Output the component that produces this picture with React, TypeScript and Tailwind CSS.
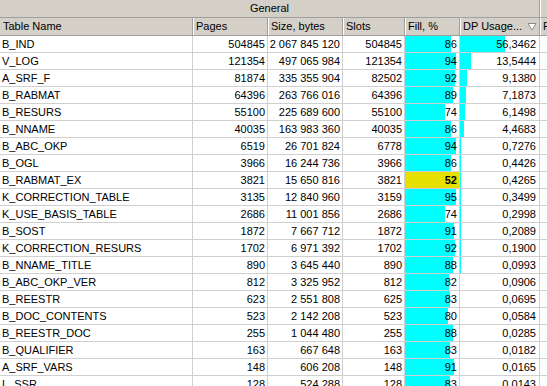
import React from "react";

type Row = [string, string, string, string, number, string];

const rows: Row[] = [
  ["B_IND", "504845", "2 067 845 120", "504845", 86, "56,3462"],
  ["V_LOG", "121354", "497 065 984", "121354", 94, "13,5444"],
  ["A_SRF_F", "81874", "335 355 904", "82502", 92, "9,1380"],
  ["B_RABMAT", "64396", "263 766 016", "64396", 89, "7,1873"],
  ["B_RESURS", "55100", "225 689 600", "55100", 74, "6,1498"],
  ["B_NNAME", "40035", "163 983 360", "40035", 86, "4,4683"],
  ["B_ABC_OKP", "6519", "26 701 824", "6778", 94, "0,7276"],
  ["B_OGL", "3966", "16 244 736", "3966", 86, "0,4426"],
  ["B_RABMAT_EX", "3821", "15 650 816", "3821", 52, "0,4265"],
  ["K_CORRECTION_TABLE", "3135", "12 840 960", "3159", 95, "0,3499"],
  ["K_USE_BASIS_TABLE", "2686", "11 001 856", "2686", 74, "0,2998"],
  ["B_SOST", "1872", "7 667 712", "1872", 91, "0,2089"],
  ["K_CORRECTION_RESURS", "1702", "6 971 392", "1702", 92, "0,1900"],
  ["B_NNAME_TITLE", "890", "3 645 440", "890", 88, "0,0993"],
  ["B_ABC_OKP_VER", "812", "3 325 952", "812", 82, "0,0906"],
  ["B_REESTR", "623", "2 551 808", "625", 83, "0,0695"],
  ["B_DOC_CONTENTS", "523", "2 142 208", "523", 80, "0,0584"],
  ["B_REESTR_DOC", "255", "1 044 480", "255", 88, "0,0285"],
  ["B_QUALIFIER", "163", "667 648", "163", 83, "0,0182"],
  ["A_SRF_VARS", "148", "606 208", "148", 91, "0,0165"],
  ["L_SSR", "128", "524 288", "128", 83, "0,0143"],
];

const hdr =
  "h-full flex items-center px-[3px] border-r border-[#a0a0a0] shadow-[inset_1px_0_0_#ffffff] whitespace-nowrap overflow-hidden";
const cell =
  "h-full flex items-center justify-end px-[2px] border-r border-[#d0d0d0] whitespace-nowrap overflow-hidden";

export default function App() {
  return (
    <div
      className="w-[547px] h-[386px] overflow-hidden bg-white text-black text-[11px] leading-none"
      style={{ fontFamily: '"Liberation Sans", Arial, sans-serif' }}
    >
      {/* group header */}
      <div className="flex h-[18px] bg-[#d4d0c8] border-b border-[#a0a0a0]">
        <div className="w-[540px] shrink-0 h-full flex items-center justify-center border-r border-[#a0a0a0]">
          General
        </div>
        <div className="flex-1 h-full shadow-[inset_1px_0_0_#ffffff]" />
      </div>
      {/* column header */}
      <div className="flex h-[18px] bg-[#d4d0c8] border-b border-[#a0a0a0]">
        <div className={`${hdr} w-[193px] shrink-0 shadow-none`}>Table Name</div>
        <div className={`${hdr} w-[75px] shrink-0`}>Pages</div>
        <div className={`${hdr} w-[75px] shrink-0`}>Size, bytes</div>
        <div className={`${hdr} w-[62px] shrink-0`}>Slots</div>
        <div className={`${hdr} w-[55px] shrink-0`}>Fill, %</div>
        <div className={`${hdr} w-[80px] shrink-0 gap-[5px]`}>
          <span>DP Usage...</span>
          <svg width="10" height="9" viewBox="0 0 10 9" className="shrink-0">
            <path d="M1 1.5 H9 L5 8 Z" fill="#ffffff" stroke="#8a8a8a" strokeWidth="1" />
          </svg>
        </div>
        <div className={`${hdr} flex-1 border-r-0`}>F</div>
      </div>
      {/* rows */}
      {rows.map(([name, pages, size, slots, fill, dp]) => {
        const dpNum = parseFloat(dp.replace(",", "."));
        const yellow = fill < 60;
        return (
          <div key={name} className="flex h-[17px] border-b border-[#d0d0d0]">
            <div className="h-full w-[193px] shrink-0 flex items-center px-[2px] border-r border-[#d0d0d0] whitespace-nowrap overflow-hidden">
              {name}
            </div>
            <div className={`${cell} w-[75px] shrink-0`}>{pages}</div>
            <div className={`${cell} w-[75px] shrink-0`}>{size}</div>
            <div className={`${cell} w-[62px] shrink-0`}>{slots}</div>
            <div className="relative h-full w-[55px] shrink-0 border-r border-[#d0d0d0]">
              {yellow ? (
                <div className="absolute inset-0 bg-[#e5e000]" />
              ) : (
                <div
                  className="absolute left-0 top-0 bottom-0 bg-[#00ffff]"
                  style={{ width: `${fill}%` }}
                />
              )}
              <div
                className={`relative h-full flex items-center justify-end px-[2px] ${
                  yellow ? "font-bold" : ""
                }`}
              >
                {fill}
              </div>
            </div>
            <div className="relative h-full w-[80px] shrink-0 border-r border-[#d0d0d0]">
              <div
                className="absolute left-0 top-0 bottom-0 bg-[#00ffff]"
                style={{ width: `${dpNum}%` }}
              />
              <div className="relative h-full flex items-center justify-end px-[3px]">{dp}</div>
            </div>
            <div className="flex-1 h-full" />
          </div>
        );
      })}
    </div>
  );
}
